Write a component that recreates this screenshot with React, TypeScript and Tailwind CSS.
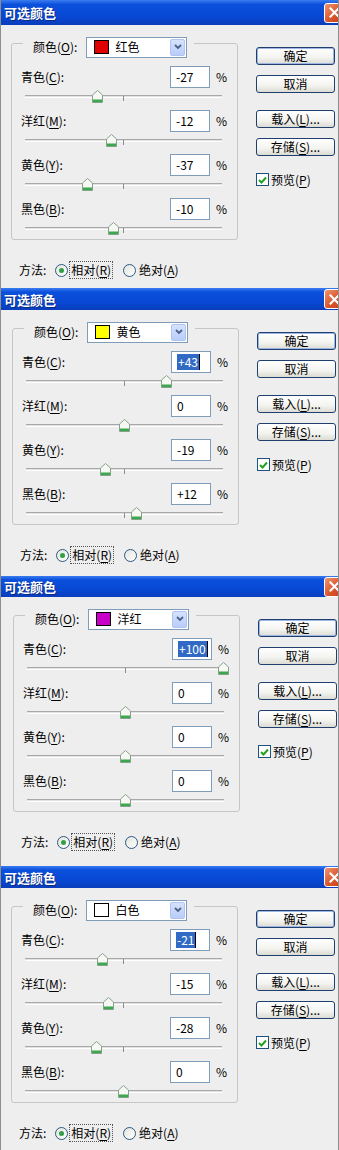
import React from "react";

type Dlg = {
  titleH: string;
  bodyH: string;
  padL: string;
  swatch: string;
  name: string;
  values: string[];
  selected: boolean;
};

const dialogs: Dlg[] = [
  { titleH: "h-[25px]", bodyH: "h-[263px]", padL: "pl-[10px]", swatch: "bg-[#e00000]", name: "红色", values: ["-27", "-12", "-37", "-10"], selected: false },
  { titleH: "h-[22px]", bodyH: "h-[266px]", padL: "pl-[11px]", swatch: "bg-[#ffff00]", name: "黄色", values: ["+43", "0", "-19", "+12"], selected: true },
  { titleH: "h-[21px]", bodyH: "h-[269px]", padL: "pl-[12px]", swatch: "bg-[#c800c8]", name: "洋红", values: ["+100", "0", "0", "0"], selected: true },
  { titleH: "h-[22px]", bodyH: "h-[262px]", padL: "pl-[10px]", swatch: "bg-white", name: "白色", values: ["-21", "-15", "-28", "0"], selected: true },
];

const rows = [
  { label: "青色", key: "C" },
  { label: "洋红", key: "M" },
  { label: "黄色", key: "Y" },
  { label: "黑色", key: "B" },
];

function U({ children }: { children: React.ReactNode }) {
  return <span className="underline underline-offset-[2px] decoration-1">{children}</span>;
}

function Thumb({ left }: { left: number }) {
  return (
    <svg className="absolute top-[2px]" style={{ left }} width="11" height="13" viewBox="0 0 11 13">
      <path d="M0.5 5 L5.5 0.5 L10.5 5 V12.5 H0.5 Z" fill="#f7f7f3" stroke="#86a08c" />
      <rect x="1" y="9.5" width="9" height="2.5" fill="#3aa84c" />
    </svg>
  );
}

function Slider({ value }: { value: number }) {
  const left = 111.5 + value * 0.98 - 5.5;
  return (
    <div className="relative h-[22px] shrink-0">
      <div className="mt-[7px] ml-[13px] w-[197px] h-[3px] border-t border-[#a8a8a8] border-b border-b-white bg-[#e2e2e2]" />
      <div className="absolute left-[111px] top-[8px] w-px h-[5px] bg-[#8c8c8c]" />
      <Thumb left={left} />
    </div>
  );
}

function Button({ children, def }: { children: React.ReactNode; def?: boolean }) {
  return (
    <div
      className={`h-[18px] w-[79px] shrink-0 rounded-[3px] border border-[#1f3f6e] bg-[linear-gradient(180deg,#ffffff_0%,#f3f3ef_60%,#dcdcd4_100%)] flex items-center justify-center text-[12px] leading-none text-black ${def ? "shadow-[inset_0_0_0_1px_#9db6e6]" : ""}`}
    >
      {children}
    </div>
  );
}

function Radio({ checked }: { checked: boolean }) {
  return (
    <div className="w-[13px] h-[13px] rounded-full border border-[#2a5a86] bg-[linear-gradient(135deg,#e4e4dc,#ffffff)] flex items-center justify-center shrink-0">
      {checked && <div className="w-[5px] h-[5px] rounded-full bg-[#2fa043]" />}
    </div>
  );
}

function Dialog({ d }: { d: Dlg }) {
  return (
    <div className="flex flex-col border-x border-[#8e8e8e] bg-[#eeeeee] overflow-hidden">
      <div
        className={`${d.titleH} shrink-0 flex items-center justify-between overflow-hidden pl-[3px] bg-[linear-gradient(180deg,#3b7cf0_0%,#0b50dc_18%,#0747d2_70%,#0a3dba_100%)]`}
      >
        <span className="text-[13px] font-bold text-white leading-none [text-shadow:1px_1px_0_#0a2a80]">可选颜色</span>
        <div className="-mr-[7px] w-[21px] h-[20px] shrink-0 rounded-[3px] border border-white bg-[linear-gradient(135deg,#ef9470_0%,#d9542a_55%,#c2401a_100%)] flex items-center justify-center">
          <svg width="11" height="11" viewBox="0 0 11 11">
            <path d="M1.5 1.5 L9.5 9.5 M9.5 1.5 L1.5 9.5" stroke="white" strokeWidth="2.2" strokeLinecap="square" />
          </svg>
        </div>
      </div>
      <div className={`${d.bodyH} shrink-0 flex ${d.padL} text-[12px] leading-none text-black`}>
        <div className="w-[227px] shrink-0 flex flex-col">
          <div className="mt-[18px] h-[197px] shrink-0 border border-[#c6c6c6] rounded-[3px] flex flex-col">
            <div className="-mt-[7px] ml-[11px] w-fit h-[20px] shrink-0 flex items-center bg-[#eeeeee] pl-[10px] pr-[7px]">
              <span>
                颜色(<U>O</U>):
              </span>
              <div className="ml-[9px] w-[101px] h-[21px] border border-[#7f9db9] bg-white flex items-center">
                <div className={`ml-[7px] w-[15px] h-[14px] border border-black ${d.swatch}`} />
                <span className="ml-[6px] flex-1">{d.name}</span>
                <div className="mr-[1px] w-[15px] h-[17px] rounded-[2px] border border-[#b0c4f2] bg-[linear-gradient(180deg,#d6e2fe,#b8cdfa)] flex items-center justify-center">
                  <svg width="8" height="6" viewBox="0 0 8 6">
                    <path d="M1 1 L4 4 L7 1" stroke="#4d6185" strokeWidth="1.8" fill="none" />
                  </svg>
                </div>
              </div>
            </div>
            <div className="mt-[9px] flex flex-col">
              {rows.map((r, i) => {
                const v = d.values[i];
                const sel = d.selected && i === 0;
                return (
                  <div key={r.key} className="flex flex-col shrink-0">
                    <div className="h-[22px] shrink-0 flex items-center">
                      <span className="w-[158px] pl-[9px]">
                        {r.label}(<U>{r.key}</U>):
                      </span>
                      <div className="w-[40px] h-[22px] border border-[#7f9db9] bg-white flex items-center pl-[5px]">
                        {sel ? (
                          <span className="bg-[#316ac5] text-white px-px py-[2px] border-r border-black">{v}</span>
                        ) : (
                          <span>{v}</span>
                        )}
                      </div>
                      <span className="ml-[6px]">%</span>
                    </div>
                    <Slider value={parseInt(v, 10)} />
                  </div>
                );
              })}
            </div>
          </div>
          <div className="mt-[22px] h-[16px] shrink-0 flex items-center pl-[8px]">
            <span>方法:</span>
            <div className="ml-[9px]">
              <Radio checked />
            </div>
            <span className="ml-px px-px py-[2px] border border-dotted border-[#555]">
              相对(<U>R</U>)
            </span>
            <div className="ml-[10px]">
              <Radio checked={false} />
            </div>
            <span className="ml-[3px]">
              绝对(<U>A</U>)
            </span>
          </div>
        </div>
        <div className="ml-[18px] w-[79px] shrink-0 flex flex-col pt-[22px]">
          <Button def>确定</Button>
          <div className="mt-[10px]">
            <Button>取消</Button>
          </div>
          <div className="mt-[17px]">
            <Button>
              载入(<U>L</U>)...
            </Button>
          </div>
          <div className="mt-[10px]">
            <Button>
              存储(<U>S</U>)...
            </Button>
          </div>
          <div className="mt-[17px] h-[13px] flex items-center">
            <div className="w-[13px] h-[13px] border border-[#1c5180] bg-white flex items-center justify-center shrink-0">
              <svg width="9" height="8" viewBox="0 0 9 8">
                <path d="M1 4 L3.5 6.5 L8 1.5" stroke="#21a121" strokeWidth="2" fill="none" />
              </svg>
            </div>
            <span className="ml-[2px]">
              预览(<U>P</U>)
            </span>
          </div>
        </div>
      </div>
    </div>
  );
}

export default function App() {
  return (
    <div className="w-[339px] h-[1150px] overflow-hidden bg-[#eeeeee] font-['Noto_Sans_CJK_SC','Noto_Sans',sans-serif]">
      {dialogs.map((d, i) => (
        <Dialog key={i} d={d} />
      ))}
    </div>
  );
}
